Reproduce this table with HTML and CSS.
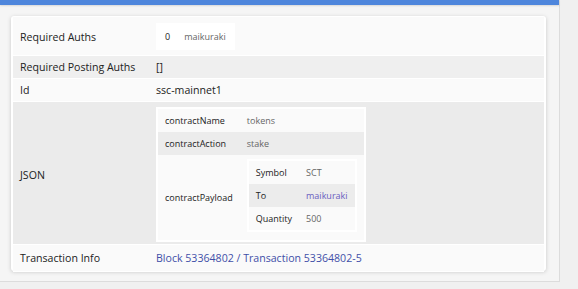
FILE: index.html
```html
<!DOCTYPE html>
<html lang="en">
<head>
<meta charset="utf-8">
<title>Transaction</title>
<link rel="stylesheet" href="styles.css">
</head>
<body>
<div class="panel">
  <div class="topbar"></div>
  <div class="card">
    <table class="details">
      <tr class="row-light row-auths">
        <th>Required Auths</th>
        <td>
          <div class="box box-auths">
            <table class="sub">
              <tr><td class="num">0</td><td class="muted">maikuraki</td></tr>
            </table>
          </div>
        </td>
      </tr>
      <tr class="row-dark">
        <th>Required Posting Auths</th>
        <td>[]</td>
      </tr>
      <tr class="row-light">
        <th>Id</th>
        <td>ssc-mainnet1</td>
      </tr>
      <tr class="row-json">
        <th>JSON</th>
        <td>
          <div class="box">
            <table class="sub">
              <tr class="sub-light"><th>contractName</th><td class="muted">tokens</td></tr>
              <tr class="sub-dark"><th>contractAction</th><td class="muted">stake</td></tr>
              <tr class="sub-light">
                <th>contractPayload</th>
                <td class="cell-box">
                  <div class="box">
                    <table class="sub">
                      <tr class="sub-light"><th>Symbol</th><td class="muted">SCT</td></tr>
                      <tr class="sub-dark"><th>To</th><td><a class="user" href="#">maikuraki</a></td></tr>
                      <tr class="sub-light"><th>Quantity</th><td class="muted">500</td></tr>
                    </table>
                  </div>
                </td>
              </tr>
            </table>
          </div>
        </td>
      </tr>
      <tr class="row-light row-info">
        <th>Transaction Info</th>
        <td><a class="link" href="#">Block 53364802</a><span class="link"> / </span><a class="link" href="#">Transaction 53364802-5</a></td>
      </tr>
    </table>
  </div>
</div>
</body>
</html>
```

FILE: styles.css
```css
html, body {
  margin: 0;
  padding: 0;
  background: #f0f0f0;
}

body {
  font-family: "Open Sans", "Liberation Sans", sans-serif;
  color: #222;
  height: 289px;
  overflow: hidden;
}

.panel {
  width: 559px;
  height: 281px;
  background: #f5f5f5;
  border-right: 1px solid #dcdcdc;
  border-bottom: 1px solid #dcdcdc;
}

.topbar {
  height: 5px;
  background: #4e86dc;
  box-shadow: 0 1px 2px rgba(0, 0, 0, 0.12);
}

.card {
  margin: 11px 0 0 11px;
  width: 535px;
  height: 255px;
  box-sizing: border-box;
  padding: 1px 2px;
  background: #ffffff;
  border-radius: 3px;
  box-shadow: 0 1px 4px rgba(0, 0, 0, 0.18);
}

table {
  border-collapse: separate;
  border-spacing: 0;
}

.details {
  width: 100%;
  font-size: 10.6px;
  line-height: 16px;
}

.details > tbody > tr > th,
.details > tbody > tr > td {
  text-align: left;
  font-weight: normal;
  vertical-align: middle;
  padding: 3px 7px;
  border-bottom: 1px solid #ffffff;
  white-space: nowrap;
}

.details > tbody > tr > th {
  width: 122px;
}

.details > tbody > .row-auths > th,
.details > tbody > .row-auths > td {
  padding-top: 3px;
  padding-bottom: 2px;
}

.details > tbody > .row-json > th,
.details > tbody > .row-json > td {
  padding-top: 5px;
  padding-bottom: 2px;
}

.details > tbody > .row-info > th,
.details > tbody > .row-info > td {
  padding-top: 5px;
  padding-bottom: 5px;
}

.row-light { background: #fafafa; }
.row-dark { background: #efefef; }
.row-json { background: #ebebeb; }

.box {
  display: inline-block;
  background: #ffffff;
  padding: 2px;
  vertical-align: middle;
}

.box-auths {
  margin: 3px 0;
}

.sub {
  font-size: 9px;
  line-height: 15px;
}

.sub th,
.sub td {
  text-align: left;
  font-weight: normal;
  vertical-align: middle;
  padding: 4px 7px;
  white-space: nowrap;
}

.sub .cell-box {
  padding: 4px 7px 8px;
}

.sub-light { background: #fafafa; }
.sub-dark { background: #ececec; }

.box-auths .sub tr { background: #ffffff; }

.num { color: #222; }
.muted { color: #666; }

.user {
  color: #6a60c0;
  text-decoration: none;
}

.link {
  color: #3f4fa8;
  text-decoration: none;
}
```
